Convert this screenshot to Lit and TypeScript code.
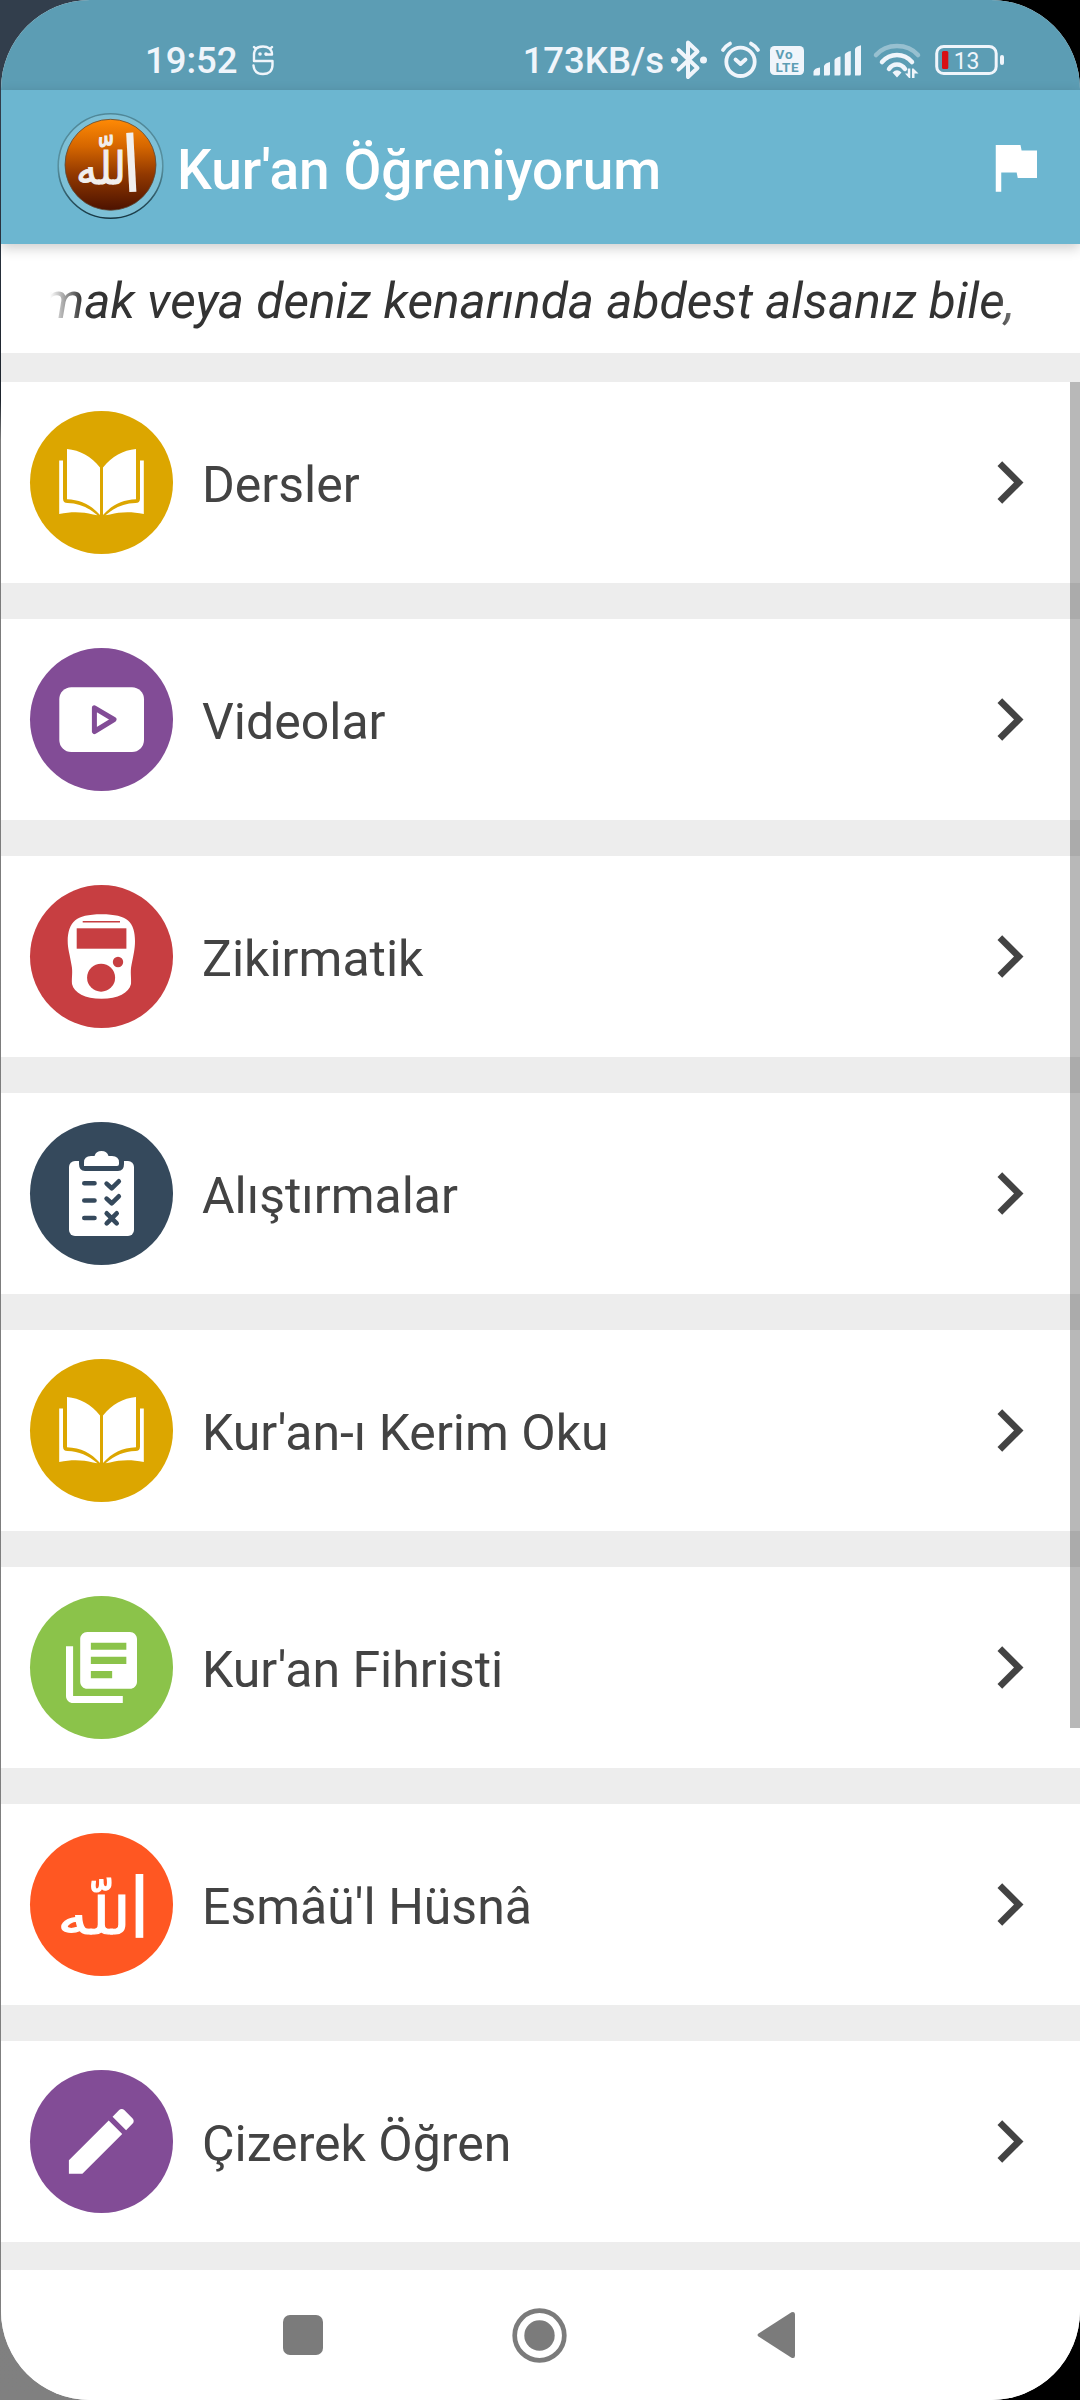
import { LitElement, html, css, svg, TemplateResult } from "lit";
import { customElement, property } from "lit/decorators.js";

interface MenuEntry {
  label: string;
  tone: string;
  icon: string;
}

const bookHalf = svg`
  <path d="M37 38C50 39 61 45.500 70 56.500V104C61 94 51 88.800 37 88.300Z"/>
  <path d="M29.200 49.500H33V87.500Q33 92 37.500 92C49 92.500 58 96 67.500 104.300L63 103.500C53 100.800 42 100.300 29.200 103Z"/>`;

const glyphs: Record<string, TemplateResult | unknown> = {
  book: svg`
    <g>${bookHalf}</g>
    <g transform="matrix(-1 0 0 1 143 0)">${bookHalf}</g>`,
  video: svg`
    <rect x="29.300" y="39.300" width="84.700" height="64.700" rx="12"/>
    <path class="cut-line" stroke-width="5" d="M64.400 59.800L84 71.500L64.400 83.500Z"/>`,
  counter: svg`
    <path d="M71.500 29.300C85 29.300 93 31.500 98 35.500C103 40 105 47 105 56C105 64 103.500 70 101.500 80C100 87 101.500 92 101 99C99 108 88 113.700 71.500 113.700C55 113.700 44 108 42 99C41.500 92 43 87 41.500 80C40 70 37.700 64 37.700 56C37.700 47 40 40 45 35.500C50 31.500 58 29.300 71.500 29.300Z"/>
    <rect class="cut" x="52.700" y="36" width="37.300" height="1.500"/>
    <rect class="cut" x="46.700" y="43.300" width="49.700" height="20.400"/>
    <circle class="cut" cx="88" cy="77" r="5.200"/>
    <circle class="cut" cx="71.100" cy="92.700" r="14"/>`,
  tasks: svg`
    <rect x="39" y="39" width="65" height="75" rx="6"/>
    <path class="cut" d="M49 36H94V42Q94 49 88 49H55Q49 49 49 42Z"/>
    <path d="M54 44V40.500Q54 34 61 34H64.500Q66 29 71.500 29T78.500 34H82Q89 34 89 40.500V42Q89 44 87 44Z"/>
    <path class="cut-line" stroke-width="4.600" d="M54.300 61.300H64.500M54.300 78.500H64.500M54.300 96H64.500M76.600 61.600L81.700 66.300L88.800 59.300M76.600 76.600L81.700 81.300L88.800 74.300M76.700 91.300L86.700 101.300M86.700 91.300L76.700 101.300"/>`,
  library: svg`
    <path transform="translate(28.900 28.900) scale(3.550)" d="M4 6H2v14c0 1.100.9 2 2 2h14v-2H4V6zm16-4H8c-1.100 0-2 .9-2 2v12c0 1.100.9 2 2 2h12c1.100 0 2-.9 2-2V4c0-1.100-.9-2-2-2zm-1 9H9V9h10v2zm-4 4H9v-2h6v2zm4-8H9V5h10v2z"/>`,
  allah: svg`
    <text class="arabic" x="109.500" y="105" text-anchor="middle" font-size="84">ا</text>
    <text class="arabic bold" x="64" y="101" text-anchor="middle" font-size="51" textLength="73" lengthAdjust="spacingAndGlyphs">للّه</text>`,
  pencil: svg`
    <path transform="translate(28.100 28.200) scale(3.600)" d="M3 17.250V21h3.750L17.810 9.940l-3.750-3.750L3 17.250zM20.710 7.040c.39-.39.39-1.020 0-1.410l-2.340-2.340c-.39-.39-1.020-.39-1.410 0l-1.830 1.830 3.750 3.750 1.830-1.830z"/>`,
};

const entries: MenuEntry[] = [
  { label: "Dersler", tone: "gold", icon: "book" },
  { label: "Videolar", tone: "violet", icon: "video" },
  { label: "Zikirmatik", tone: "red", icon: "counter" },
  { label: "Alıştırmalar", tone: "navy", icon: "tasks" },
  { label: "Kur'an-ı Kerim Oku", tone: "gold", icon: "book" },
  { label: "Kur'an Fihristi", tone: "green", icon: "library" },
  { label: "Esmâü'l Hüsnâ", tone: "orange", icon: "allah" },
  { label: "Çizerek Öğren", tone: "violet", icon: "pencil" },
];

@customElement("status-bar")
class StatusBar extends LitElement {
  static styles = css`
    :host {
      display: flex;
      align-items: center;
      height: 90px;
      box-sizing: border-box;
      padding: 30px 76px 0 144px;
      background: #5c9db4;
      color: #f0f5fb;
      font: 500 36.500px/60px Roboto, sans-serif;
    }
    span { padding-top: 2px; }
    svg {
      display: block;
      flex: none;
      fill: #f0f5fb;
      overflow: visible;
    }
    .line {
      fill: none;
      stroke: #f0f5fb;
      stroke-linecap: round;
      stroke-linejoin: round;
    }
    .mascot { margin-left: 14px; }
    .speed { margin-left: auto; }
    .bt { margin-left: 7px; }
    .alarm { margin-left: 13px; }
    .volte { margin-left: 10px; }
    .signal { margin-left: 9px; }
    .wifi { margin-left: 13px; }
    .battery { margin-left: 15px; }
    .lte {
      fill: #5c9db4;
      font: 700 13.500px Roboto, sans-serif;
    }
    .level {
      font: 400 23px Roboto, sans-serif;
    }
    .low { fill: #d81014; }
    .faint { opacity: 0.4; }
  `;

  render() {
    return html`
      <span class="time">19:52</span>
      <svg class="mascot" width="22" height="60" viewBox="0 0 22 60">
        <path class="line" stroke-width="2.400" d="M2 31V25C2 19 6 16.500 11 16.500S20 19 20 24.500M2 31H20.500V35C20.500 41 16.500 44 11 44C5.500 44 2 41 1.500 35.500M2 17L4 19M20 17L18 19M20 24.500H14"/>
        <circle cx="8" cy="24" r="1.800"/><circle cx="14" cy="24" r="1.800"/>
      </svg>
      <span class="speed">173KB/s</span>
      <svg class="bt" width="37" height="60" viewBox="671 30 37 60">
        <path class="line" stroke-width="4" d="M678.500 50L697.500 68L688 77V42.500L697.500 51.500L678.500 69.500"/>
        <circle cx="674.500" cy="60" r="3.500"/><circle cx="703.500" cy="60" r="3.500"/>
      </svg>
      <svg class="alarm" width="39" height="60" viewBox="721 30 39 60">
        <circle class="line" stroke-width="3.800" cx="740.500" cy="61.800" r="14.200"/>
        <path class="line" stroke-width="3.800" d="M735.500 59.500L740.500 64L745.500 59.500M723 50Q725.500 46 730 43.600M758 50Q755.500 46 751 43.600"/>
      </svg>
      <svg class="volte" width="34" height="60" viewBox="770 30 34 60">
        <rect x="770" y="46" width="34" height="29" rx="4.500"/>
        <text class="lte" x="775.500" y="59" textLength="17">Vo</text>
        <text class="lte" x="775.500" y="71.500" textLength="23">LTE</text>
      </svg>
      <svg class="signal" width="48" height="60" viewBox="813 30 48 60">
        <path d="M813.500 75.500V71.500Q814.500 68 820 67.500V74Q820 75.500 818.500 75.500ZM824 75.500V66Q825 63 830 62V74Q830 75.500 828.500 75.500ZM834.500 75.500V60Q835.500 57.500 840.500 56.500V74Q840.500 75.500 839 75.500ZM844.800 75.500V54.500Q845.800 52 850.800 51V74Q850.800 75.500 849.300 75.500ZM855 75.500V49Q856 46.500 861 45.300V74Q861 75.500 859.500 75.500Z"/>
      </svg>
      <svg class="wifi" width="46" height="60" viewBox="874 30 46 60">
        <path class="line faint" stroke-width="4.500" d="M876 55Q884 46 897 46T918 55"/>
        <path class="line" stroke-width="4.500" d="M882 62Q888 55 897 55T912 62M889 69Q892 64.500 897 64.500T905 69"/>
        <path d="M892.500 72.500Q897 68 901.500 72.500L897 77.500ZM905 73.500H907.800V68.500H910.300V78H909ZM912 78V68.500H913.500L918.500 73.500H914.500V78Z"/>
      </svg>
      <svg class="battery" width="69" height="60" viewBox="935 30 69 60">
        <rect class="line" stroke-width="3" x="936.700" y="46.500" width="59.500" height="27" rx="7"/>
        <rect x="1000" y="55" width="4" height="10" rx="2"/>
        <rect class="low" x="942" y="51" width="6.300" height="18" rx="1.500"/>
        <text class="level" x="953.700" y="69">13</text>
      </svg>`;
  }
}

@customElement("app-header")
class AppHeader extends LitElement {
  static styles = css`
    :host {
      display: flex;
      align-items: center;
      height: 154px;
      box-sizing: border-box;
      padding: 0 32px 0 56px;
      background: #6cb6d0;
      box-shadow: 0 4px 12px rgba(0, 0, 0, 0.2);
      position: relative;
      color: #fff;
      font: 500 55px/150px Roboto, sans-serif;
    }
    svg { display: block; flex: none; overflow: visible; }
    .title { margin-left: 10px; padding-top: 5px; }
    .flag { margin-left: auto; fill: #fff; }
    .arabic { font-family: "DejaVu Sans", sans-serif; font-weight: 400; fill: #f1efee; }
    .bold { stroke: #f1efee; stroke-width: 1; }
  `;

  render() {
    return html`
      <svg class="logo" width="110" height="154" viewBox="0 0 110 154">
        <defs>
          <linearGradient id="disc" x1="0" y1="0" x2="0" y2="1">
            <stop offset="0" stop-color="#ff8a05"/>
            <stop offset=".3" stop-color="#d56600"/>
            <stop offset=".6" stop-color="#933900"/>
            <stop offset="1" stop-color="#4c1200"/>
          </linearGradient>
          <linearGradient id="ring" x1="0" y1="0" x2="0" y2="1">
            <stop offset="0" stop-color="#4f8798"/>
            <stop offset=".5" stop-color="#57909f"/>
            <stop offset="1" stop-color="#163642"/>
          </linearGradient>
        </defs>
        <circle cx="53.500" cy="76" r="52.300" fill="#7dc0d6" stroke="url(#ring)" stroke-width="1.600"/>
        <circle cx="53.500" cy="74.800" r="45.500" fill="url(#disc)" stroke="#5b4a3a" stroke-width=".8"/>
        <text class="arabic" x="74.500" y="102" text-anchor="middle" font-size="78" transform="rotate(-3 74 75)">ا</text>
        <text class="arabic bold" x="44" y="94" text-anchor="middle" font-size="45" textLength="50" lengthAdjust="spacingAndGlyphs">للّه</text>
      </svg>
      <span class="title">Kur'an Öğreniyorum</span>
      <svg class="flag" width="66" height="66" viewBox="0 0 24 24">
        <path d="M14.400 6L14 4H5v17h2v-7h5.600l.4 2h7V6z"/>
      </svg>`;
  }
}

@customElement("menu-card")
class MenuCard extends LitElement {
  @property() label = "";
  @property() tone = "";
  @property() icon = "";

  static styles = css`
    :host {
      display: flex;
      align-items: center;
      height: 201px;
      box-sizing: border-box;
      padding: 0 56px 0 29px;
      background: #fff;
      color: #434343;
      font: 400 50px/60px Roboto, sans-serif;
    }
    svg { display: block; flex: none; }
    .disc { fill: #fff; border-radius: 50%; overflow: visible; }
    .gold { background: #dca600; --tone: #dca600; }
    .violet { background: #824c96; --tone: #824c96; }
    .red { background: #c73e41; --tone: #c73e41; }
    .navy { background: #35495c; --tone: #35495c; }
    .green { background: #8bc34a; --tone: #8bc34a; }
    .orange { background: #ff5722; --tone: #ff5722; }
    .cut { fill: var(--tone); }
    .cut-line {
      fill: none;
      stroke: var(--tone);
      stroke-linecap: round;
      stroke-linejoin: round;
    }
    .arabic { font-family: "DejaVu Sans", sans-serif; }
    .bold { stroke: #fff; stroke-width: 1.2; }
    .label { margin-left: 29px; padding-top: 4px; flex: 1; }
  `;

  render() {
    return html`
      <svg class="disc ${this.tone}" width="143" height="143" viewBox="0 0 143 143">${glyphs[this.icon]}</svg>
      <span class="label">${this.label}</span>
      <svg width="27" height="43" viewBox="0 0 27 43">
        <path fill="#434343" d="M5.200 .3L26.500 21.500L5.200 42.700L.5 38L17 21.500L.5 5Z"/>
      </svg>`;
  }
}

@customElement("nav-bar")
class NavBar extends LitElement {
  static styles = css`
    :host {
      display: flex;
      align-items: center;
      justify-content: center;
      gap: 189px;
      height: 130px;
      padding-right: 2px;
      box-sizing: border-box;
      background: #fff;
    }
    svg { display: block; fill: #7b7b7b; }
  `;

  render() {
    return html`
      <svg width="40" height="40" viewBox="0 0 40 40"><rect width="40" height="40" rx="7"/></svg>
      <svg width="55" height="55" viewBox="0 0 55 55">
        <circle cx="27.500" cy="27.500" r="24.800" fill="none" stroke="#7b7b7b" stroke-width="4.700"/>
        <circle cx="27.500" cy="27.500" r="15.200"/>
      </svg>
      <svg width="40" height="48" viewBox="0 0 40 48">
        <path d="M2.500 22.500L35.500 1.300Q39 0 39 3.500V44.500Q39 48 35.500 46.700L2.500 25.500Q.5 24 2.500 22.500Z"/>
      </svg>`;
  }
}

@customElement("app-root")
class AppRoot extends LitElement {
  static styles = css`
    :host {
      display: block;
      width: 1080px;
      height: 2400px;
      box-sizing: border-box;
      padding-left: 1px;
      overflow: hidden;
      background:
        linear-gradient(#323e4c 0, #323e4c 100px, #1d232c 400px, #7b7b7b 440px, #808080 100%) left / 50% 100% no-repeat,
        #000;
    }
    .screen {
      display: flex;
      flex-direction: column;
      height: 2400px;
      border-radius: 89px;
      overflow: hidden;
      background: #ededed;
    }
    .ticker {
      height: 109px;
      box-sizing: border-box;
      padding: 0 48px 0 49px;
      background: #fff;
    }
    .ticker-text {
      white-space: nowrap;
      text-indent: -8px;
      color: #333;
      font: italic 400 49.700px/115px Roboto, sans-serif;
      -webkit-mask-image: linear-gradient(90deg, transparent 0, #000 32px, #000 calc(100% - 36px), rgba(0, 0, 0, 0.65) calc(100% - 20px), transparent);
      mask-image: linear-gradient(90deg, transparent 0, #000 32px, #000 calc(100% - 36px), rgba(0, 0, 0, 0.65) calc(100% - 20px), transparent);
    }
    .list {
      position: relative;
      display: flex;
      flex-direction: column;
      gap: 36px;
      margin-top: 29px;
      height: 1888px;
    }
    .thumb {
      position: absolute;
      top: 0;
      right: 0;
      width: 10px;
      height: 1346px;
      background: rgba(0, 0, 0, 0.28);
    }
  `;

  render() {
    return html`
      <div class="screen">
        <status-bar></status-bar>
        <app-header></app-header>
        <div class="ticker">
          <div class="ticker-text">mak veya deniz kenarında abdest alsanız bile,</div>
        </div>
        <div class="list">
          ${entries.map(
            (e) => html`<menu-card .label=${e.label} .tone=${e.tone} .icon=${e.icon}></menu-card>`
          )}
          <div class="thumb"></div>
        </div>
        <nav-bar></nav-bar>
      </div>`;
  }
}
